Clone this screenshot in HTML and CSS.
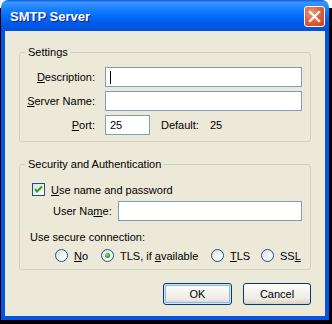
FILE: index.html
```html
<!DOCTYPE html>
<html lang="en">
<head>
    <meta charset="UTF-8">
    <title>SMTP Server</title>
    <link rel="stylesheet" href="styles.css">
</head>
<body>
    <div class="window">
        <div class="titlebar">
            <span class="titlebar__text">SMTP Server</span>
            <span class="titlebar__close">
                <svg width="19" height="19" viewBox="0 0 19 19">
                    <path d="M5 5 L14 14 M14 5 L5 14" stroke="#fff" stroke-width="2.2" stroke-linecap="square"/>
                </svg>
            </span>
        </div>
        <div class="client">
            <fieldset class="group">
                <legend class="group__title">Settings</legend>
                <div class="settings">
                    <label class="settings__label"><u>D</u>escription:</label>
                    <div class="field"><span class="field__caret"></span></div>
                    <label class="settings__label"><u>S</u>erver Name:</label>
                    <div class="field"></div>
                    <label class="settings__label"><u>P</u>ort:</label>
                    <div class="port">
                        <div class="field field--port">25</div>
                        <span class="port__default">Default:</span>
                        <span>25</span>
                    </div>
                </div>
            </fieldset>

            <fieldset class="group group--security">
                <legend class="group__title">Security and Authentication</legend>
                <div class="check">
                    <span class="check__box">
                        <svg width="11" height="11" viewBox="0 0 11 11">
                            <path d="M2 5 L4 7.5 L9 2.5" fill="none" stroke="#21a121" stroke-width="2"/>
                        </svg>
                    </span>
                    <span><u>U</u>se name and password</span>
                </div>
                <div class="user">
                    <label class="user__label">User Na<u>m</u>e:</label>
                    <div class="field"></div>
                </div>
                <div class="secure">Use secure connection:</div>
                <div class="radios">
                    <div class="radio"><span class="radio__dot"></span><span><u>N</u>o</span></div>
                    <div class="radio"><span class="radio__dot radio__dot--on"></span><span>TLS, if <u>a</u>vailable</span></div>
                    <div class="radio"><span class="radio__dot"></span><span><u>T</u>LS</span></div>
                    <div class="radio"><span class="radio__dot"></span><span>SS<u>L</u></span></div>
                </div>
            </fieldset>

            <div class="buttons">
                <button class="btn btn--default">OK</button>
                <button class="btn btn--cancel">Cancel</button>
            </div>
        </div>
    </div>
</body>
</html>
```

FILE: styles.css
```css
* {
    box-sizing: border-box;
}
html, body {
    margin: 0;
    padding: 0;
}
body {
    background: linear-gradient(180deg, #fff 0, #fff 8px, #000 8px);
    font-family: "Liberation Sans", Arial, sans-serif;
    font-size: 11px;
    color: #000;
    height: 324px;
}
.window {
    width: 328px;
    height: 320px;
    margin-left: 1px;
    display: flex;
    flex-direction: column;
    border-radius: 7px 7px 0 0;
    overflow: hidden;
}
.titlebar {
    height: 31px;
    flex: none;
    display: flex;
    align-items: center;
    justify-content: space-between;
    padding: 0 4px 0 9px;
    background: linear-gradient(180deg, #0a5de6 0%, #3d94ff 8%, #2a8bff 18%, #157eff 32%, #0570fb 48%, #0264f0 62%, #0059e6 76%, #0055e3 88%, #0050dc 100%);
}
.titlebar__text {
    color: #fff;
    font-weight: 700;
    font-size: 13px;
    text-shadow: 1px 1px 0 #0a1e8a;
    padding-top: 1px;
}
.titlebar__close {
    width: 21px;
    height: 21px;
    border: 1px solid #fff;
    border-radius: 3px;
    background: radial-gradient(circle at 35% 30%, #ec9a7e 0%, #e2643f 45%, #c8401f 100%);
    display: flex;
    align-items: center;
    justify-content: center;
    margin-top: 2px;
}
.client {
    flex: 1;
    background: #ece9d8;
    border: 4px solid #0553e2;
    border-top: none;
    padding: 15px 14px 11px 14px;
    display: flex;
    flex-direction: column;
}
.group {
    margin: 0;
    padding: 0;
    border: 1px solid #d0d0bf;
    border-radius: 3px;
    min-width: 0;
}
.group--security {
    margin-top: 16px;
    padding: 0 8px 7px 0;
}
.group__title {
    margin-left: 6px;
    padding: 0 2px;
    line-height: 13px;
}
.settings {
    display: grid;
    grid-template-columns: 75px 1fr;
    grid-auto-rows: 20px;
    column-gap: 10px;
    row-gap: 4px;
    align-items: center;
    padding: 8px 8px 6px 0;
}
.settings__label {
    text-align: right;
}
.field {
    height: 20px;
    background: #fff;
    border: 1px solid #7f9db9;
    display: flex;
    align-items: center;
    padding-left: 4px;
}
.field__caret {
    width: 1px;
    height: 13px;
    background: #000;
}
.port {
    display: flex;
    align-items: center;
}
.field--port {
    width: 45px;
}
.port__default {
    margin: 0 10px 0 11px;
    width: 39px;
}
.check {
    display: flex;
    align-items: center;
    gap: 6px;
    height: 13px;
    margin-top: 12px;
    padding-left: 12px;
}
.check__box {
    width: 13px;
    height: 13px;
    border: 1px solid #1c5180;
    background: linear-gradient(135deg, #dcdcd7 0%, #fff 90%);
    display: flex;
}
.user {
    display: flex;
    align-items: center;
    height: 20px;
    margin-top: 5px;
    padding-left: 33px;
}
.user__label {
    width: 65px;
    flex: none;
}
.user .field {
    flex: 1;
}
.secure {
    margin-top: 10px;
    line-height: 13px;
    padding-left: 10px;
}
.radios {
    display: grid;
    grid-template-columns: 46px 110px 50px auto;
    height: 13px;
    margin-top: 5px;
    padding-left: 35px;
}
.radio {
    display: flex;
    align-items: center;
    gap: 6px;
}
.radio__dot {
    width: 13px;
    height: 13px;
    border: 1px solid #1c5180;
    border-radius: 50%;
    background: linear-gradient(135deg, #dcdcd7 0%, #fff 85%);
    display: flex;
    align-items: center;
    justify-content: center;
}
.radio__dot--on::after {
    content: "";
    width: 5px;
    height: 5px;
    border-radius: 50%;
    background: radial-gradient(circle at 40% 40%, #8ee28e 0%, #21a121 60%, #1a8a1a 100%);
}
.buttons {
    margin-top: 13px;
    display: flex;
    justify-content: flex-end;
    gap: 11px;
}
.btn {
    height: 22px;
    font-family: inherit;
    font-size: 11px;
    color: #000;
    border: 1px solid #003c74;
    border-radius: 3px;
    background: linear-gradient(180deg, #fff 0%, #f5f4ef 40%, #ecebe6 75%, #d6d0c5 100%);
    padding: 0;
}
.btn--default {
    width: 69px;
    box-shadow: inset 0 0 0 1px #cee7ff, inset 0 0 0 2px #98b5e8;
}
.btn--cancel {
    width: 68px;
}
```
